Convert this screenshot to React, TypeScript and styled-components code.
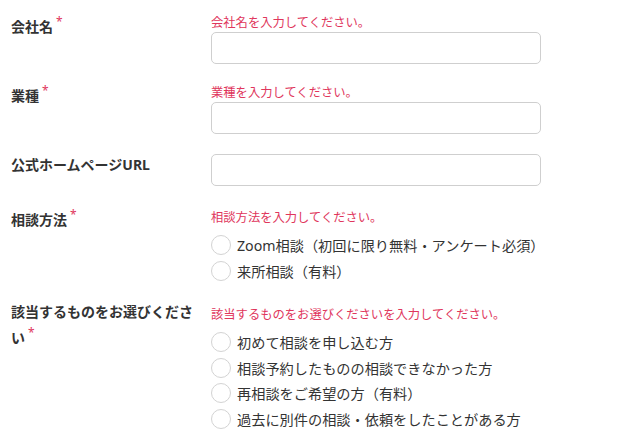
import React from "react";
import styled, { createGlobalStyle } from "styled-components";

const Global = createGlobalStyle`
  html, body { margin: 0; padding: 0; background: #fff; }
  body { font-family: "Noto Sans", "Noto Sans CJK JP", sans-serif; color: #333; }
`;

const Form = styled.form`
  display: flex;
  flex-direction: column;
  gap: 20px;
  padding: 14px 0 0 11px;
  width: 644px;
  box-sizing: border-box;
`;

const Row = styled.div<{ $radio?: boolean }>`
  display: grid;
  grid-template-columns: 190px 330px;
  column-gap: 10px;
  align-items: start;
  padding-top: ${(p) => (p.$radio ? "2.5px" : "0")};
`;

const Label = styled.div<{ $shift: number }>`
  font-size: 14px;
  font-weight: 700;
  line-height: 26px;
  color: #333;
  margin-top: ${(p) => p.$shift}px;
`;

const Required = styled.span`
  display: inline-block;
  font-size: 12px;
  font-weight: 400;
  line-height: 12px;
  vertical-align: top;
  margin-left: 3px;
  position: relative;
  top: 2px;
  color: #e0365c;
`;

const Field = styled.div`
  display: flex;
  flex-direction: column;
`;

const ErrorText = styled.div`
  font-size: 12.3px;
  line-height: 18px;
  color: #e0365c;
  white-space: nowrap;
`;

const TextInput = styled.input`
  box-sizing: border-box;
  width: 330px;
  height: 32px;
  border: 1px solid #cfcfcf;
  border-radius: 5px;
  background: #fff;
  outline: none;
  padding: 0 10px;
  font: inherit;
  font-size: 14px;
`;

const RadioList = styled.div`
  display: flex;
  flex-direction: column;
  margin-top: 6px;
`;

const RadioItem = styled.label`
  display: flex;
  align-items: center;
  gap: 6px;
  height: 25.4px;
  font-size: 14.2px;
  color: #333;
  white-space: nowrap;
  cursor: pointer;
`;

const RadioCircle = styled.span`
  box-sizing: border-box;
  width: 20px;
  height: 20px;
  border: 1px solid #d3d3d3;
  border-radius: 50%;
  background: #fff;
  flex: none;
`;

type RadioFieldProps = { error: string; options: string[] };

const RadioField = ({ error, options }: RadioFieldProps) => (
  <Field>
    <ErrorText>{error}</ErrorText>
    <RadioList>
      {options.map((o) => (
        <RadioItem key={o}>
          <RadioCircle />
          {o}
        </RadioItem>
      ))}
    </RadioList>
  </Field>
);

export default function App() {
  return (
    <>
      <Global />
      <Form>
        <Row>
          <Label $shift={0}>
            会社名<Required>*</Required>
          </Label>
          <Field>
            <ErrorText>会社名を入力してください。</ErrorText>
            <TextInput type="text" />
          </Field>
        </Row>
        <Row>
          <Label $shift={-1}>
            業種<Required>*</Required>
          </Label>
          <Field>
            <ErrorText>業種を入力してください。</ErrorText>
            <TextInput type="text" />
          </Field>
        </Row>
        <Row>
          <Label $shift={-2}>公式ホームページURL</Label>
          <Field>
            <TextInput type="text" />
          </Field>
        </Row>
        <Row $radio>
          <Label $shift={-1.5}>
            相談方法<Required>*</Required>
          </Label>
          <RadioField
            error="相談方法を入力してください。"
            options={["Zoom相談（初回に限り無料・アンケート必須）", "来所相談（有料）"]}
          />
        </Row>
        <Row $radio>
          <Label $shift={-6.5}>
            該当するものをお選びください<Required>*</Required>
          </Label>
          <RadioField
            error="該当するものをお選びくださいを入力してください。"
            options={[
              "初めて相談を申し込む方",
              "相談予約したものの相談できなかった方",
              "再相談をご希望の方（有料）",
              "過去に別件の相談・依頼をしたことがある方",
            ]}
          />
        </Row>
      </Form>
    </>
  );
}
